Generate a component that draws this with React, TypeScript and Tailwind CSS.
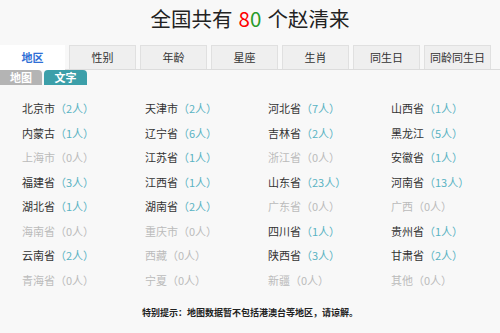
import React from "react";

const rows: [string, number][][] = [
  [["北京市", 2], ["天津市", 2], ["河北省", 7], ["山西省", 1]],
  [["内蒙古", 1], ["辽宁省", 6], ["吉林省", 2], ["黑龙江", 5]],
  [["上海市", 0], ["江苏省", 1], ["浙江省", 0], ["安徽省", 1]],
  [["福建省", 3], ["江西省", 1], ["山东省", 23], ["河南省", 13]],
  [["湖北省", 1], ["湖南省", 2], ["广东省", 0], ["广西", 0]],
  [["海南省", 0], ["重庆市", 0], ["四川省", 1], ["贵州省", 1]],
  [["云南省", 2], ["西藏", 0], ["陕西省", 3], ["甘肃省", 2]],
  [["青海省", 0], ["宁夏", 0], ["新疆", 0], ["其他", 0]],
];

const tabs = ["性别", "年龄", "星座", "生肖", "同生日", "同龄同生日"];

const font = { fontFamily: '"Noto Sans CJK SC", "Noto Sans", sans-serif' };

export default function App() {
  return (
    <div className="w-[500px] h-[333px] bg-[#f8f8f8] text-[#333] overflow-hidden" style={font}>
      <div className="h-[37px] flex items-center justify-center text-[20.5px] text-[#222] leading-none">
        <span>全国共有</span>
        <span className="ml-[6px]">
          <span className="text-[#ff0000]">8</span>
          <span className="text-[#2a9a2a]">0</span>
        </span>
        <span className="ml-[6px]">个赵清来</span>
      </div>
      <div className="mt-[8px] flex h-[25px] border-b border-[#dcdcdc]">
        <div className="w-[65px] h-[25px] bg-white mr-[4px] flex items-center justify-center text-[11px] text-[#2f6fd6] font-bold">
          地区
        </div>
        {tabs.map((t) => (
          <div
            key={t}
            className="w-[67px] h-[24px] bg-[#efefef] border border-b-0 border-[#e0e0e0] mr-[4px] flex items-center justify-center text-[11px] text-[#333]"
          >
            {t}
          </div>
        ))}
      </div>
      <div className="flex h-[15px]">
        <div className="w-[42px] h-[15px] bg-[#b4b4b4] rounded-tr-[4px] text-white text-[11px] font-bold leading-[15px] text-center">
          地图
        </div>
        <div className="ml-[2px] w-[43px] h-[15px] bg-[#3c9fa9] rounded-t-[4px] text-white text-[11px] font-bold leading-[15px] text-center">
          文字
        </div>
      </div>
      <div className="mt-[11px] pl-[22px]">
        {rows.map((row, i) => (
          <div key={i} className="grid grid-cols-[123px_123px_123px_123px] h-[24.5px] items-center text-[11px]">
            {row.map(([name, n]) => (
              <div key={name} className={n === 0 ? "text-[#bbbbbb]" : "text-[#333]"}>
                {name}
                <span className={n === 0 ? "text-[#bbbbbb]" : "text-[#5ab3c3]"}>（{n}人）</span>
              </div>
            ))}
          </div>
        ))}
      </div>
      <div className="mt-[14px] text-center text-[9px] text-[#222] font-bold">
        特别提示：地图数据暂不包括港澳台等地区，请谅解。
      </div>
    </div>
  );
}
